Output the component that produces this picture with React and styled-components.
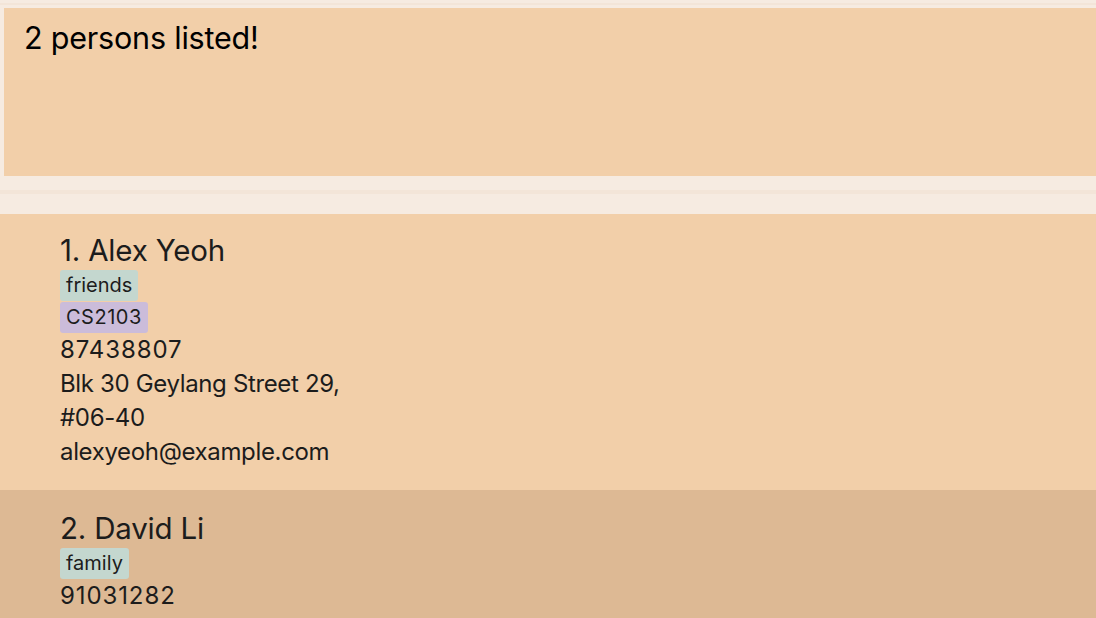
import React from "react";
import styled, { createGlobalStyle } from "styled-components";

const GlobalStyle = createGlobalStyle`
  html, body {
    margin: 0;
    padding: 0;
    background: #f6ebe1;
    font-family: Inter, "Noto Sans", "Liberation Sans", sans-serif;
  }
`;

const Page = styled.div`
  width: 1096px;
  height: 618px;
  overflow: hidden;
  display: flex;
  flex-direction: column;
  background: #f6ebe1;

  & > * {
    flex-shrink: 0;
  }
`;

const TopStrip = styled.div`
  height: 3px;
  border-bottom: 2px solid #f3e5d8;
  margin-bottom: 3px;
`;

const ResultBox = styled.div`
  margin-left: 4px;
  height: 168px;
  box-sizing: border-box;
  padding: 11px 20px;
  background: #f2cfa9;
  font-size: 30.5px;
  color: #000;
  letter-spacing: -0.2px;
`;

const Divider = styled.div`
  height: 14px;
  border-bottom: 4px solid #f3e5d8;
  margin-bottom: 20px;
`;

const List = styled.div`
  display: flex;
  flex-direction: column;
`;

const Card = styled.div`
  background: ${(p) => (p.odd ? "#ddb994" : "#f2cfa9")};
  padding: ${(p) => (p.odd ? "21px" : "19px")} 60px 21px;
  display: flex;
  flex-direction: column;
  align-items: flex-start;
  color: #1c1c1c;
`;

const Name = styled.div`
  font-size: 29.5px;
  line-height: 34px;
  letter-spacing: -0.2px;
  margin-bottom: 3px;
`;

const Tags = styled.div`
  display: flex;
  flex-direction: column;
  align-items: flex-start;
  gap: 1px;
`;

const Tag = styled.span`
  font-size: 20px;
  line-height: 23px;
  padding: 4px 6px;
  border-radius: 3px;
  background: ${(p) => p.color};
  color: #1c1c1c;
  letter-spacing: ${(p) => (p.digits ? "0.5px" : "0")};
`;

const Field = styled.div`
  font-size: 24px;
  line-height: 34px;
  letter-spacing: ${(p) => (p.digits ? "0.9px" : "-0.35px")};
  max-width: ${(p) => (p.narrow ? "300px" : "none")};
`;

const tagColors = {
  friends: "#c4d7cf",
  family: "#c4d7cf",
  CS2103: "#cbbcda",
};

const persons = [
  {
    name: "Alex Yeoh",
    tags: ["friends", "CS2103"],
    phone: "87438807",
    address: "Blk 30 Geylang Street 29, #06-40",
    email: "alexyeoh@example.com",
  },
  {
    name: "David Li",
    tags: ["family"],
    phone: "91031282",
    address: "Blk 436 Serangoon Gardens Street 26, #16-43",
    email: "lidavid@example.com",
  },
];

function App() {
  return (
    <Page>
      <GlobalStyle />
      <TopStrip />
      <ResultBox>2 persons listed!</ResultBox>
      <Divider />
      <List>
        {persons.map((p, i) => (
          <Card key={p.name} odd={i % 2 === 1}>
            <Name>
              {i + 1}. {p.name}
            </Name>
            <Tags>
              {p.tags.map((t) => (
                <Tag key={t} color={tagColors[t]} digits={/\d/.test(t)}>
                  {t}
                </Tag>
              ))}
            </Tags>
            <Field digits>{p.phone}</Field>
            <Field narrow>{p.address}</Field>
            <Field>{p.email}</Field>
          </Card>
        ))}
      </List>
    </Page>
  );
}

export default App;
